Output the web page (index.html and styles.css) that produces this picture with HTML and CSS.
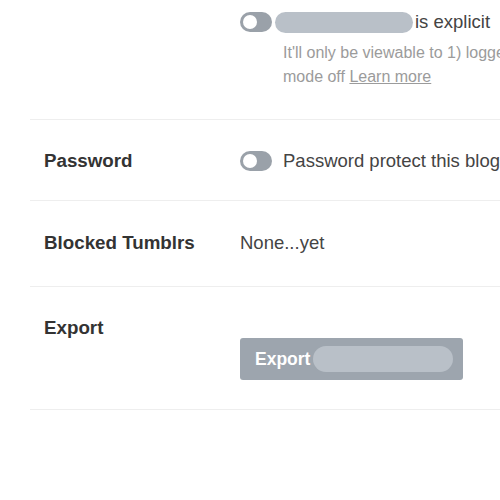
FILE: index.html
```html
<!DOCTYPE html>
<html>
<head>
<meta charset="utf-8">
<link rel="stylesheet" href="styles.css">
</head>
<body>
<div class="settings">
  <div class="row row-first">
    <div class="label"></div>
    <div class="content">
      <div class="line">
        <span class="toggle"><span class="knob"></span></span>
        <span class="blob blob-name"></span>
        <span class="text">is explicit</span>
      </div>
      <div class="desc">It'll only be viewable to 1) logged-in users who have Safe<br>mode off <a class="link">Learn more</a></div>
    </div>
  </div>
  <div class="row row-password">
    <div class="label">Password</div>
    <div class="content">
      <div class="line">
        <span class="toggle"><span class="knob"></span></span>
        <span class="text">Password protect this blog</span>
      </div>
    </div>
  </div>
  <div class="row row-blocked">
    <div class="label">Blocked Tumblrs</div>
    <div class="content">
      <div class="line"><span class="text">None...yet</span></div>
    </div>
  </div>
  <div class="row row-export">
    <div class="label">Export</div>
    <div class="content">
      <button class="btn"><span class="btn-text">Export</span><span class="blob blob-btn"></span></button>
    </div>
  </div>
</div>
</body>
</html>
```

FILE: styles.css
```css
html, body {
  margin: 0;
  padding: 0;
  background: #ffffff;
}
body {
  font-family: "Liberation Sans", Arial, sans-serif;
  overflow: hidden;
}
.settings {
  margin-left: 30px;
}
.row {
  display: grid;
  grid-template-columns: 196px 1fr;
  padding: 30px 0 30px 14px;
  border-bottom: 1px solid #eeeeee;
  white-space: nowrap;
}
.row-first {
  padding-top: 11px;
}
.row-password {
  padding-bottom: 28px;
}
.row-blocked {
  padding-top: 31px;
  padding-bottom: 32px;
}
.row-export {
  padding-bottom: 29px;
}
.label {
  font-weight: bold;
  font-size: 18.75px;
  line-height: 22px;
  color: #333333;
}
.content {
  overflow: hidden;
}
.line {
  display: flex;
  align-items: center;
  height: 22px;
}
.toggle {
  position: relative;
  display: inline-block;
  width: 32px;
  height: 20px;
  border-radius: 10px;
  background: #9aa1a9;
  margin-right: 11px;
  flex: none;
}
.knob {
  position: absolute;
  left: 3px;
  top: 3px;
  width: 14px;
  height: 14px;
  border-radius: 50%;
  background: #ffffff;
}
.text {
  font-size: 18.5px;
  color: #444444;
}
.blob {
  display: inline-block;
  background: #b9c0c8;
  border-radius: 11px;
}
.blob-name {
  width: 138px;
  height: 21px;
  margin-left: -8px;
  margin-right: 2px;
  flex: none;
}
.desc {
  margin-top: 8px;
  padding-left: 43px;
  font-size: 16px;
  line-height: 24px;
  color: #9b9b9b;
}
.link {
  color: #9b9b9b;
  text-decoration: underline;
}
.row-export .content {
  padding-top: 21px;
}
.btn {
  display: flex;
  align-items: center;
  width: 223px;
  height: 42px;
  padding: 0 0 0 15px;
  border: none;
  border-radius: 3px;
  background: #9da5ae;
  font-family: "Liberation Sans", Arial, sans-serif;
  font-weight: bold;
  font-size: 17.5px;
  color: #ffffff;
}
.blob-btn {
  width: 140px;
  height: 26px;
  border-radius: 13px;
  margin-left: 3px;
}
```
